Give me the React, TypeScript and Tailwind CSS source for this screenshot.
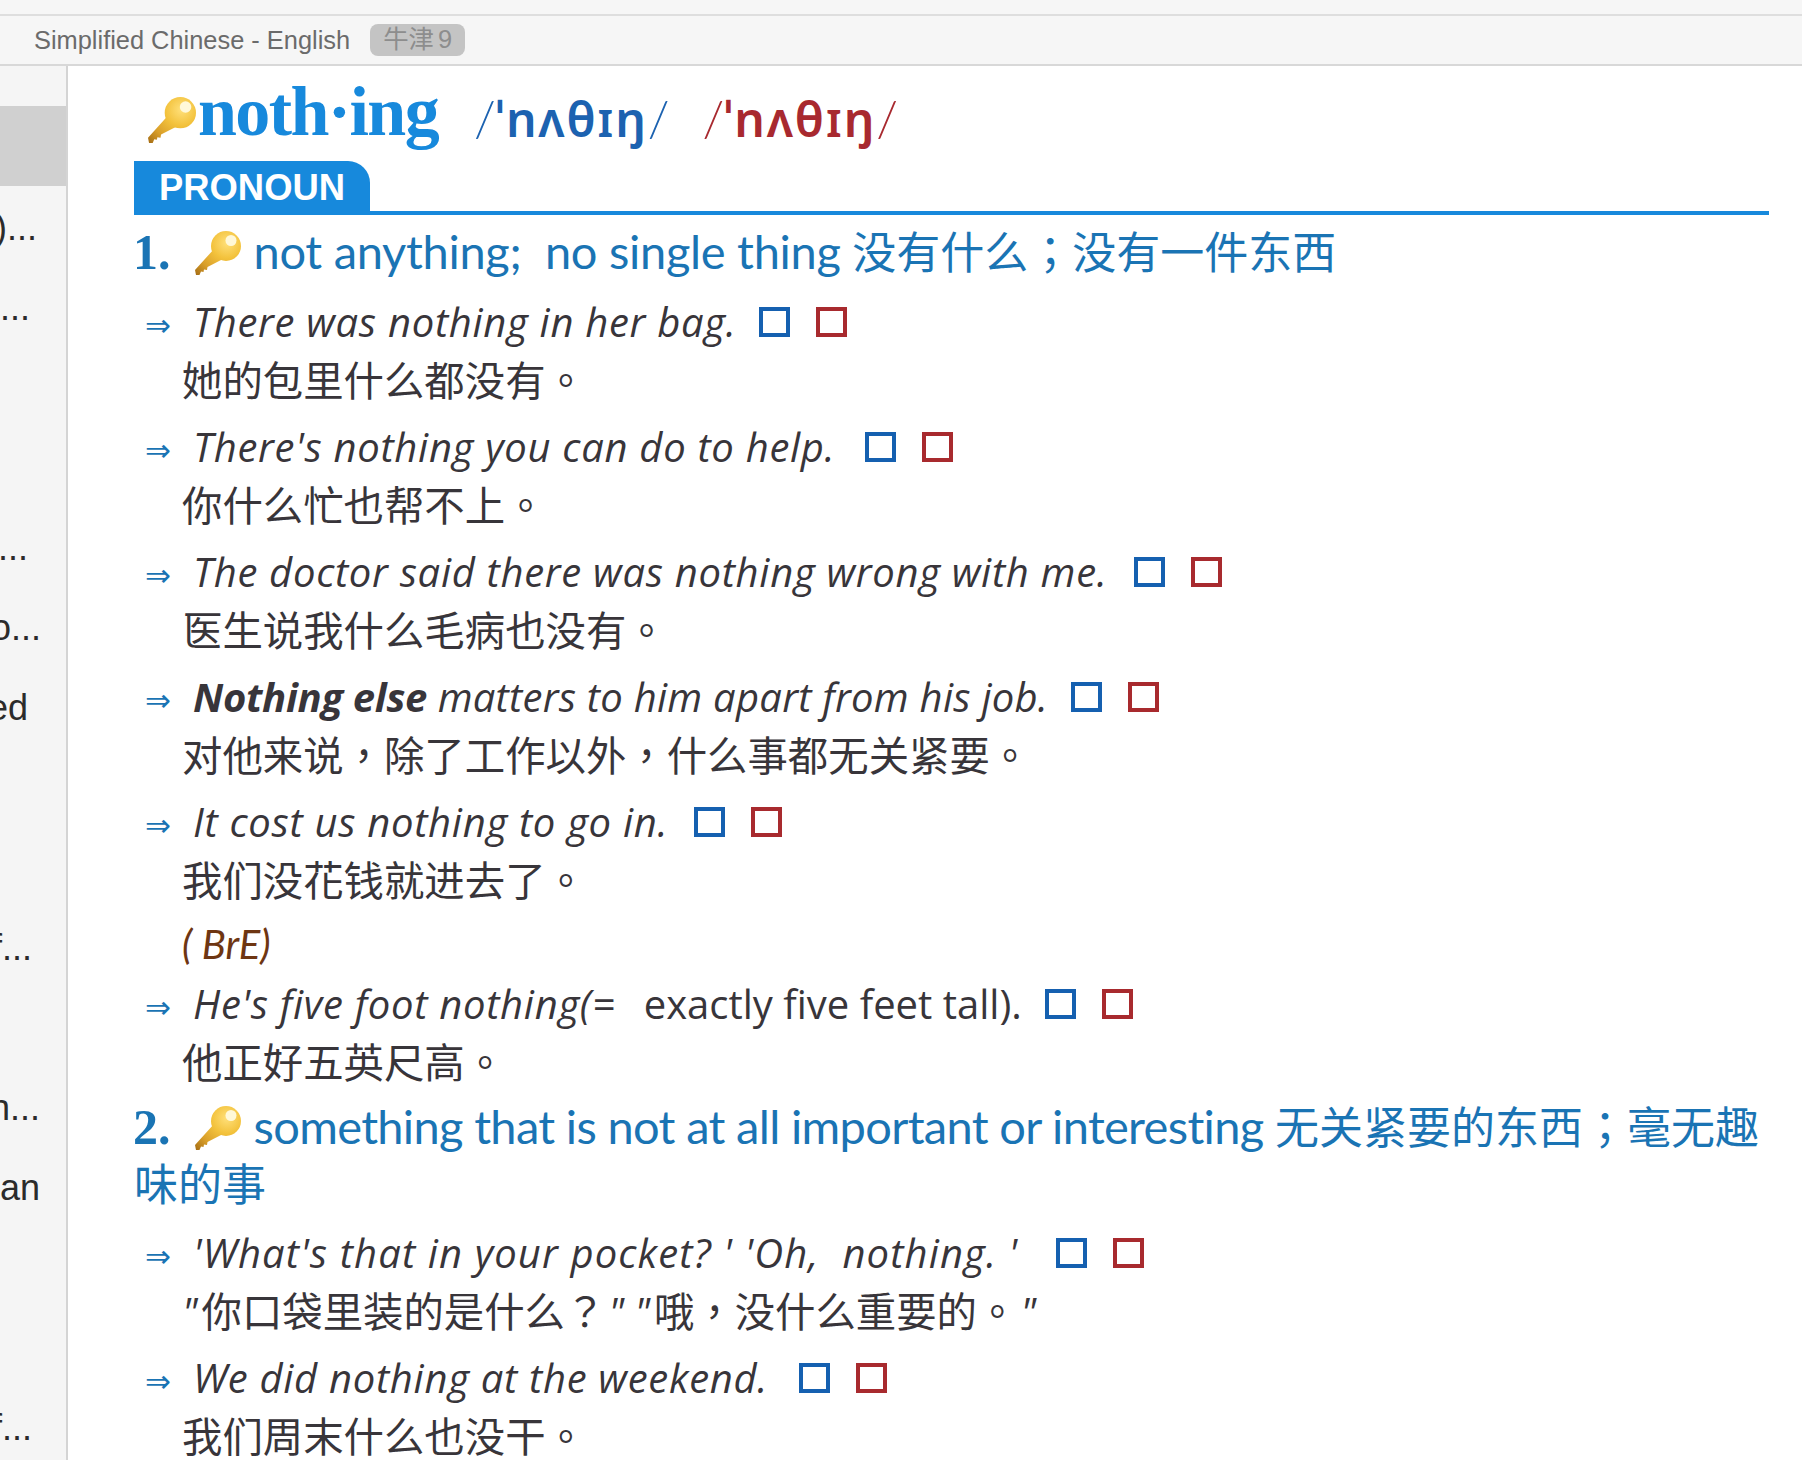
import { ReactNode } from "react";

const cjk = '"Noto Sans CJK TC", sans-serif';

const sideRows = [
  { text: "", className: "bg-[#d0d0d0]" },
  { text: "(1)...", className: "pr-[29px]" },
  { text: "...", className: "pr-[36px]" },
  { text: "", className: "" },
  { text: "", className: "" },
  { text: "...", className: "pr-[38px]" },
  { text: "do...", className: "pr-[25px]" },
  { text: "ed", className: "pr-[38px]" },
  { text: "", className: "" },
  { text: "", className: "" },
  { text: "of...", className: "pr-[34px]" },
  { text: "", className: "" },
  { text: "in...", className: "pr-[26px]" },
  { text: "an", className: "pr-[26px]" },
  { text: "", className: "" },
  { text: "", className: "" },
  { text: "of...", className: "pr-[34px]" },
];

const KeyIcon = ({ id, className }: { id: string; className: string }) => (
  <svg viewBox="0 0 46 44" className={className} aria-hidden="true">
    <defs>
      <radialGradient id={id} gradientUnits="userSpaceOnUse" cx="32" cy="12" r="44">
        <stop offset="0" stopColor="#ffe07a" />
        <stop offset="0.35" stopColor="#f3c23c" />
        <stop offset="0.7" stopColor="#d99f2a" />
        <stop offset="1" stopColor="#a87016" />
      </radialGradient>
    </defs>
    <path
      d="M0 39 L19 18 L28 28 L12.500 36 L12 39 L9 38.500 L8.500 41 L6 40.500 L4.500 44 L1 44 Z"
      fill={`url(#${id})`}
    />
    <circle cx="31" cy="15" r="15" fill={`url(#${id})`} />
    <circle cx="36" cy="9.500" r="5.500" fill="#fff8d8" />
  </svg>
);

const Speakers = ({ className = "ml-[26px]" }: { className?: string }) => (
  <span className={`inline-flex gap-[26px] not-italic ${className}`}>
    <span className="block w-[31px] h-[30px] border-[4px] border-[#1560b0]" />
    <span className="block w-[31px] h-[30px] border-[4px] border-[#a82a2e]" />
  </span>
);

const Example = ({ en, cn, gap }: { en: ReactNode; cn: ReactNode; gap?: string }) => (
  <div className="mb-[9px]">
    <div className="flex items-center h-[58px] pt-[4px] pl-[11px]">
      <span
        className="w-[48px] shrink-0 text-[31px] text-[#1a74b4] leading-none pt-[6px]"
        style={{ fontFamily: '"DejaVu Sans", sans-serif' }}
      >
        ⇒
      </span>
      <span className="italic text-[40px] leading-[54px] font-['Open_Sans',sans-serif] text-[#38353a] tracking-[0.7px] whitespace-pre">
        {en}
      </span>
      <Speakers className={gap} />
    </div>
    <div
      className="h-[58px] pl-[48px] text-[40.4px] leading-[64px] text-[#38353a] whitespace-nowrap"
      style={{ fontFamily: `"Open Sans", ${cjk}` }}
    >
      {cn}
    </div>
  </div>
);

const Sense = ({ num, text, cn, className }: { num: string; text: string; cn: string; className: string }) => (
  <div className="text-[47px] leading-[55px] text-[#1a74b4] mb-[11px]">
    <span className="font-bold text-[50px] font-['Liberation_Serif',serif] mr-[24px] -ml-[1px]">{num}</span>
    <KeyIcon id={`key-${num}`} className="inline-block w-[46px] h-[44px] mr-[13px] align-[-6px]" />
    <span className={`whitespace-pre-wrap ${className}`}>{text} </span>
    <span style={{ fontFamily: cjk }} className="text-[44px]">
      {cn}
    </span>
  </div>
);

const Phonetic = ({ className }: { className: string }) => (
  <span className={`leading-[84px] flex items-baseline ${className}`}>
    <span className="text-[50px] font-['Lato',sans-serif] font-light">/</span>
    <span className="text-[48px] font-['Noto_Sans',sans-serif] font-semibold tracking-[1.8px]">ˈnʌθɪŋ</span>
    <span className="text-[50px] font-['Lato',sans-serif] font-light">/</span>
  </span>
);

export default function App() {
  return (
    <div className="w-[1802px] h-[1460px] overflow-hidden bg-white flex flex-col font-['Lato','Noto_Sans_CJK_TC',sans-serif]">
      <div className="h-[16px] shrink-0 bg-[#f6f6f6] border-b-2 border-[#dedede]" />
      <div className="h-[50px] shrink-0 bg-[#f6f6f6] border-b-2 border-[#d8d8d8] flex items-center pl-[34px] gap-[20px] font-['Liberation_Sans',sans-serif] text-[25.4px] text-[#6b6b6b]">
        <span>Simplified Chinese - English</span>
        <span
          className="w-[95px] h-[32px] rounded-[8px] bg-[#c4c4c4] text-[#8d8d8d] flex items-center justify-center leading-none"
          style={{ fontFamily: `"Liberation Sans", ${cjk}` }}
        >
          牛津<span className="ml-[4px]">9</span>
        </span>
      </div>
      <div className="flex flex-1 min-h-0">
        <div className="w-[68px] shrink-0 bg-[#f5f5f5] border-r-2 border-[#d4d4d4] pt-[40px] overflow-hidden font-['Liberation_Sans',sans-serif] text-[36px] text-[#2b2b2b]">
          {sideRows.map((row, idx) => (
            <div key={idx} className={`h-[80px] pt-[3px] flex items-center justify-end whitespace-nowrap ${row.className}`}>
              {row.text}
            </div>
          ))}
        </div>
        <div className="flex-1 min-w-0 pl-[66px] pr-[33px]">
          <div className="h-[95px] flex items-end pl-[14px]">
            <KeyIcon id="key-head" className="w-[48px] h-[46px] mb-[18px] mr-[2px]" />
            <span className="font-['Liberation_Serif',serif] font-bold text-[70px] leading-[98px] text-[#1789dc] tracking-[-1.6px] mr-[36px]">
              noth·ing
            </span>
            <Phonetic className="text-[#1c62b0] mr-[33px]" />
            <Phonetic className="text-[#a8292f]" />
          </div>
          <div className="h-[54px] border-b-[4px] border-[#1789dc] mb-[8px]">
            <div className="w-[236px] h-[54px] bg-[#1789dc] rounded-tr-[22px] pl-[25px] font-['Liberation_Sans',sans-serif] font-bold text-[36.4px] leading-[54px] text-white">
              PRONOUN
            </div>
          </div>
          <Sense num="1." text="not anything;  no single thing" cn="没有什么；没有一件东西" className="tracking-[-0.3px]" />
          <Example en="There was nothing in her bag." cn="她的包里什么都没有。" gap="ml-[22px]" />
          <Example en="There's nothing you can do to help." cn="你什么忙也帮不上。" gap="ml-[30px]" />
          <Example en="The doctor said there was nothing wrong with me." cn="医生说我什么毛病也没有。" />
          <Example
            en={
              <>
                <b className="tracking-[-0.3px]">Nothing else</b>
                <span className="tracking-[0.25px]"> matters to him apart from his job.</span>
              </>
            }
            cn="对他来说，除了工作以外，什么事都无关紧要。"
            gap="ml-[23px]"
          />
          <Example en="It cost us nothing to go in." cn="我们没花钱就进去了。" />
          <div className="pl-[48px] h-[57px] text-[40px] leading-[56px] italic text-[#6e3612]">( BrE)</div>
          <Example
            en={
              <>
                He's five foot nothing(=  <span className="not-italic tracking-[0px] ml-[6px]">exactly five feet tall).</span>
              </>
            }
            cn="他正好五英尺高。"
            gap="ml-[23px]"
          />
          <Sense
            num="2."
            text="something that is not at all important or interesting"
            cn="无关紧要的东西；毫无趣味的事"
            className="tracking-[-0.67px]"
          />
          <Example
            en={<span className="tracking-[1.12px]">'What's that in your pocket? ' 'Oh,  nothing. '</span>}
            cn={
              <>
                <i className="pr-[4px]">"</i>你口袋里装的是什么？<i className="ml-[3px]">"</i>{" "}
                <i className="pr-[4px]">"</i>哦，没什么重要的。<i className="ml-[3px]">"</i>
              </>
            }
            gap="ml-[38px]"
          />
          <Example en="We did nothing at the weekend." cn="我们周末什么也没干。" gap="ml-[31px]" />
        </div>
      </div>
    </div>
  );
}
